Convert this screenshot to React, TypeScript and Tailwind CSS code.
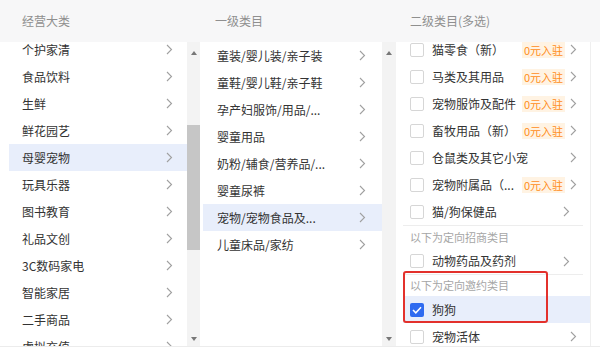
import React from 'react';

const font = { fontFamily: '"Microsoft YaHei", "Noto Sans CJK SC", "Noto Sans", sans-serif' };

const level1 = ['个护家清', '食品饮料', '生鲜', '鲜花园艺', '母婴宠物', '玩具乐器', '图书教育', '礼品文创', '3C数码家电', '智能家居', '二手商品', '虚拟充值'];
const level2 = ['童装/婴儿装/亲子装', '童鞋/婴儿鞋/亲子鞋', '孕产妇服饰/用品/...', '婴童用品', '奶粉/辅食/营养品/...', '婴童尿裤', '宠物/宠物食品及...', '儿童床品/家纺'];

type Sub = { name: string; badge?: boolean };
const subs: Sub[] = [
  { name: '猫零食（新）', badge: true },
  { name: '马类及其用品', badge: true },
  { name: '宠物服饰及配件', badge: true },
  { name: '畜牧用品（新）', badge: true },
  { name: '仓鼠类及其它小宠' },
  { name: '宠物附属品（...', badge: true },
];

function Chevron() {
  return (
    <svg width="7" height="11" viewBox="0 0 7 11" className="shrink-0">
      <path d="M1 1l4.5 4.5L1 10" stroke="#a0a0a0" strokeWidth="1.1" fill="none" />
    </svg>
  );
}

function Checkbox({ checked }: { checked?: boolean }) {
  if (checked)
    return (
      <span className="w-[14px] h-[14px] rounded-[2px] bg-[#2f6bf0] flex items-center justify-center shrink-0">
        <svg width="10" height="8" viewBox="0 0 10 8">
          <path d="M1 4l2.8 2.8L9 1.3" stroke="#fff" strokeWidth="1.5" fill="none" />
        </svg>
      </span>
    );
  return <span className="w-[14px] h-[14px] rounded-[2px] border border-[#d6d6d6] bg-white shrink-0" />;
}

function Scrollbar({ thumb }: { thumb?: boolean }) {
  return (
    <div className="h-full bg-[#f3f3f3] flex flex-col items-center w-full">
      <span className="mt-[9px] w-0 h-0 border-l-[3px] border-r-[3px] border-b-[4px] border-l-transparent border-r-transparent border-b-[#777]" />
      {thumb ? <div className="mt-[70px] w-full h-[125px] bg-[#c6c6c6]" /> : null}
      <div className="flex-1" />
      <span className="mb-[5px] w-0 h-0 border-l-[3px] border-r-[3px] border-t-[4px] border-l-transparent border-r-transparent border-t-[#777]" />
    </div>
  );
}

function SubRow({ s, short }: { s: Sub; short?: boolean }) {
  return (
    <div className={`${short ? 'h-[26px]' : 'h-[27px]'} flex items-center pl-[7px] pr-[13px]`}>
      <Checkbox />
      <span className="ml-[8px] flex-1 whitespace-nowrap">{s.name}</span>
      {s.badge ? (
        <span className="text-[11px] text-[#ff8d1a] bg-[#fff3e3] px-[2px] leading-[16px] mr-[5px] whitespace-nowrap">0元入驻</span>
      ) : null}
      <Chevron />
    </div>
  );
}

export default function App() {
  return (
    <div className="w-[600px] h-[359px] bg-white relative overflow-hidden text-[12px] text-[#333]" style={font}>
      {/* header */}
      <div className="flex h-[42px] bg-[#f7f7f8] text-[#8f8f8f] items-center">
        <div className="w-[200px] pl-[22px]">经营大类</div>
        <div className="w-[196px] pl-[15px]">一级类目</div>
        <div className="w-[204px] pl-[14px]">二级类目(多选)</div>
      </div>

      <div className="flex h-[305px] border-b border-[#ececec]">
        {/* column 1 */}
        <div className="w-[200px] flex">
          <div className="w-[188px] pl-[9px] overflow-hidden">
            <div className="-mt-[6px]">
              {level1.map((t) => (
                <div
                  key={t}
                  className={`h-[27px] flex items-center justify-between pl-[13px] pr-[14px] ${t === '母婴宠物' ? 'bg-[#e8eefb]' : ''}`}
                >
                  <span>{t}</span>
                  <Chevron />
                </div>
              ))}
            </div>
          </div>
          <div className="w-[13px]">
            <Scrollbar thumb />
          </div>
        </div>

        {/* column 2 */}
        <div className="w-[196px] flex">
          <div className="w-[182px] pl-[3px] overflow-hidden">
            {level2.map((t) => (
              <div
                key={t}
                className={`h-[27px] flex items-center justify-between pl-[14px] pr-[16px] ${t === '宠物/宠物食品及...' ? 'bg-[#e8eefb]' : ''}`}
              >
                <span>{t}</span>
                <Chevron />
              </div>
            ))}
          </div>
          <div className="w-[14px]">
            <Scrollbar />
          </div>
        </div>

        {/* column 3 */}
        <div className="w-[204px] flex">
          <div className="w-[194px] pl-[7px] overflow-hidden">
            <div className="-mt-[6px]">
              {subs.map((s) => (
                <SubRow key={s.name} s={s} />
              ))}
              <div className="border-b border-[#ededed] mr-[7px]">
                <SubRow s={{ name: '猫/狗保健品' }} />
              </div>
              <div className="h-[22px] flex items-center pl-[7px] text-[11px] text-[#a5a5a5]">以下为定向招商类目</div>
              <div className="border-b border-[#ededed] mr-[7px]">
                <SubRow s={{ name: '动物药品及药剂' }} short />
              </div>
              <div className="h-[21px] flex items-center pl-[7px] text-[11px] text-[#a5a5a5]">以下为定向邀约类目</div>
              <div className="h-[27px] flex items-center pl-[7px] bg-[#e8eefb]">
                <Checkbox checked />
                <span className="ml-[8px]">狗狗</span>
              </div>
              <SubRow s={{ name: '宠物活体' }} />
            </div>
          </div>
          <div className="w-[10px] border-l border-[#efefef]" />
        </div>
      </div>

      {/* highlight frame */}
      <div className="absolute left-[403px] top-[271px] w-[145px] h-[52px] border-2 border-[#e3312c] rounded-[3px]" />
    </div>
  );
}
